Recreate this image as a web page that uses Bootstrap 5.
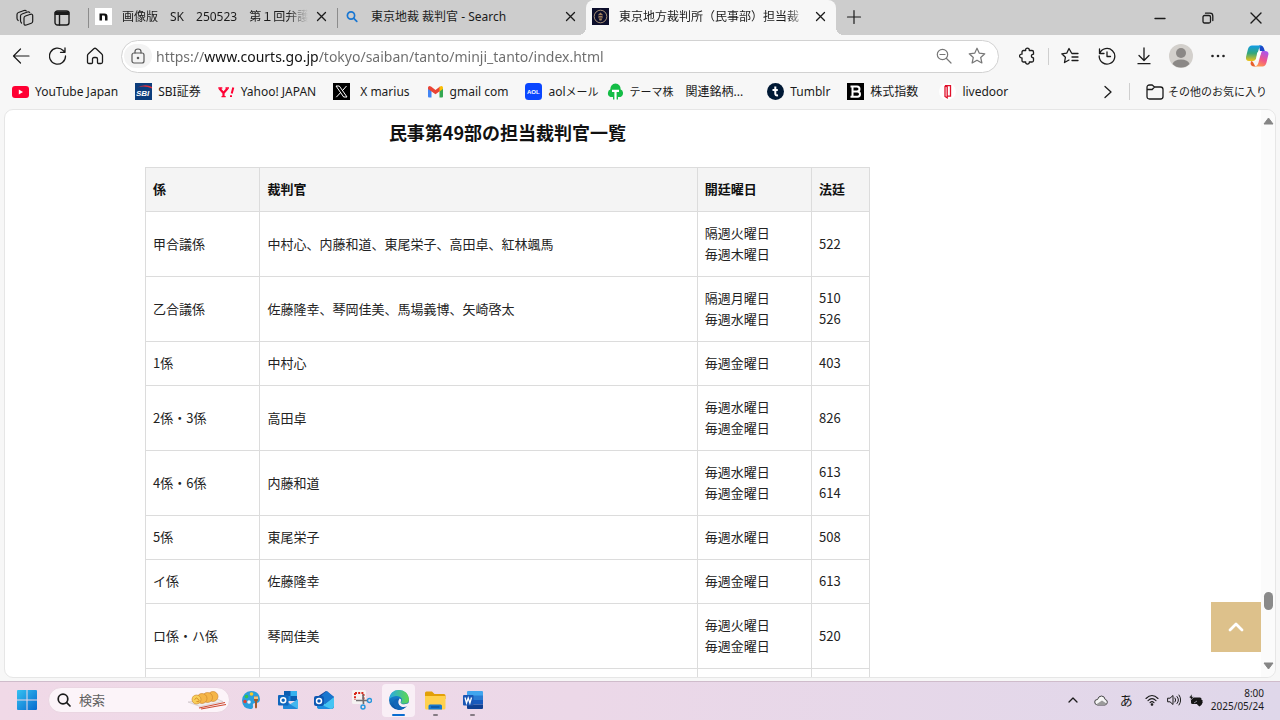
<!DOCTYPE html>
<html lang="ja">
<head>
<meta charset="utf-8">
<meta name="viewport" content="width=device-width, initial-scale=1">
<title>東京地方裁判所（民事部）担当裁判官一覧</title>
<link rel="stylesheet" href="https://cdn.jsdelivr.net/npm/bootstrap@5.3.0/dist/css/bootstrap.min.css">
<style>
  body { font-family: "Noto Sans", "Noto Sans CJK JP", sans-serif; font-size: 12px; line-height: 18px; color: #1b1b1b; background: #f7f7f7; }
  svg { display: block; flex: none; }
  .ln { fill: none; stroke: currentColor; stroke-linecap: round; stroke-linejoin: round; }
  .plain { border: 0; background: transparent; padding: 0; color: inherit; display: flex; align-items: center; justify-content: center; flex: none; }
  a { color: inherit; text-decoration: none; }

  .tabstrip { background: #cdcdcd; height: 35px; }
  .strip-lead { width: 88px; padding-left: 16px; gap: 20px; }
  .browser-tab { width: 249px; height: 35px; padding: 0 6px 2px 6px; border-left: 1px solid transparent; position: relative; min-width: 0; }
  .browser-tab::before { content: ""; position: absolute; left: -1px; top: 8px; height: 20px; border-left: 1px solid #8c8c8c; }
  .browser-tab.current { background: #f7f7f7; border-radius: 8px 8px 0 0; border: 0; width: 250px; }
  .browser-tab.current::before, .browser-tab.current::after { content: ""; position: absolute; bottom: 0; top: auto; width: 8px; height: 8px; border: 0; }
  .browser-tab.current::before { left: -8px; background: radial-gradient(circle at 0 0, transparent 8px, #f7f7f7 8px); }
  .browser-tab.current::after { right: -8px; background: radial-gradient(circle at 100% 0, transparent 8px, #f7f7f7 8px); }
  .tab-title { flex: 1 1 0; min-width: 0; overflow: hidden; white-space: nowrap; margin-left: 10px; }
  .fade-end { -webkit-mask-image: linear-gradient(90deg, #000 calc(100% - 20px), transparent); mask-image: linear-gradient(90deg, #000 calc(100% - 20px), transparent); }
  .win-btn { width: 48px; height: 35px; }

  .toolbar { height: 42px; padding: 0 3px 0 2px; }
  .tool { width: 37px; height: 34px; }
  .tool-wide { width: 41px; }
  .tool-sep { margin: 0 2px; }
  .address { height: 33px; border: 1px solid #d2d2d2; border-radius: 17px; background: #fff; padding: 0 8px 0 2px; margin: 0 10px 0 8px; }
  .lock-disc { width: 28px; height: 24px; border-radius: 14px; background: #f3f3f3; color: #5a5a5a; }
  .address-action { color: #777; }
  .url-box { border: 0; outline: 0; padding: 0; font-size: 14px; height: 24px; min-width: 0; color: #666;
    background: linear-gradient(90deg, #6b6b6b 48px, #111 48px, #111 163px, #6b6b6b 163px); -webkit-background-clip: text; background-clip: text; -webkit-text-fill-color: transparent; }
  .vline { width: 1px; height: 17px; background: #cfcfcf; flex: none; }

  .favbar { height: 32px; padding: 0 13px 3px 12px; white-space: nowrap; }
  .fav { gap: 6px; flex: none; margin-right: 17px; }
  .kana { font-size: 11px; }

  .viewport { background: #fff; border: 1px solid #e6e6e6; border-radius: 9px; margin: 0 4px 3px 4px; position: relative; min-height: 0; }
  .doc { padding-left: 140px; font-family: "Noto Sans CJK JP", sans-serif; }
  .doc-inner { max-width: 725px; }
  .doc h2 { font-size: 18px; line-height: 26px; font-weight: 700; color: #111; margin: 9px 0 22px; text-align: center; }
  .judges { font-size: 13px; line-height: 21px; table-layout: fixed; border-collapse: collapse; color: #222; }
  .judges th, .judges td { border: 1px solid #dcdcdc; padding: 10px 7px 12px; vertical-align: middle; text-align: left; }
  .judges th { background: #f4f4f4; color: #111; font-weight: 700; }
  .scroll-rail { width: 14px; background: #fbfbfb; border-radius: 0 9px 9px 0; padding: 7px 0; }
  .scroll-thumb { width: 9px; height: 18px; border-radius: 5px; background: #8a8a8a; }
  .to-top { position: absolute; right: 14px; bottom: 25px; width: 50px; height: 50px; background: #ddc18b; color: #fff; }

  .taskbar { height: 39px; background: linear-gradient(90deg, #f0d9e7, #ecd8e8 45%, #dfd7ea); border-top: 1px solid #cfbccb; padding: 0 16px 2px 17px; }
  .task-search { width: 182px; height: 26px; border-radius: 13px; background: #fcf4f9; border: 1px solid #ead6e2; margin: 0 2px 0 11px; padding: 0 2px 0 8px; gap: 8px; }
  .task-search input { border: 0; outline: 0; background: transparent; padding: 0; width: 60px; font-size: 13px; color: #555; flex: 1 1 0; }
  .task-search input::placeholder { color: #606060; opacity: 1; }
  .task-item { width: 37px; height: 33px; position: relative; border-radius: 4px; }
  .task-item.open::after { content: ""; position: absolute; bottom: 1px; width: 5px; height: 2px; border-radius: 1px; background: #857b84; }
  .task-item.front { background: #f9eff6; width: 33px; margin: 0 2px; }
  .task-item.front::after { width: 13px; background: #0a6cd0; }
  .ime { font-size: 13px; }
  .clock { font-size: 10px; line-height: 13px; text-align: right; }
</style>
</head>
<body class="vh-100 d-flex flex-column overflow-hidden">

<header class="flex-shrink-0">
  <div class="tabstrip d-flex align-items-center">
    <div class="strip-lead d-flex align-items-center flex-shrink-0">
      <button class="plain" aria-label="ワークスペース"><svg width="18" height="18" viewBox="0 0 18 18" class="ln" stroke-width="1.2"><path d="M9.500 7 14.500 5.300Q16.700 4.700 16.700 6.800v5.400Q16.700 13.700 15.300 14.200L10.300 16Q8 16.600 8 14.500V9Q8 7.500 9.500 7zM5.500 14Q4.500 13 4.500 11.500V7Q4.500 5.500 6 5L11.500 3Q13 2.500 13.700 3.500M2.200 11.500Q1 10.700 1 9.300V5.500Q1 4 2.500 3.500L8 1.500Q9.500 1 10.200 1.800"/></svg></button>
      <button class="plain" aria-label="タブ操作"><svg width="16" height="16" viewBox="0 0 16 16" class="ln" stroke-width="1.4"><rect x="1" y="1" width="14" height="14" rx="2.500"/><path d="M1.500 2.500h13M1.500 4h13" stroke-width="2"/><path d="M5.500 5v10"/></svg></button>
    </div>
    <a href="#" class="browser-tab d-flex align-items-center">
      <svg width="17" height="17" viewBox="0 0 17 17"><rect width="17" height="17" fill="#fff"/><path d="M4.500 12.500V5.500h5Q12.500 5.500 12.500 8.500v4H10V9Q10 7.600 8.900 7.600H7v4.900z" fill="#111"/></svg>
      <span class="tab-title fade-end">画像版　SK　250523　第１回弁護</span>
      <span class="ms-2 me-1"><svg width="11" height="11" viewBox="0 0 11 11" class="ln" stroke-width="1.300"><path d="M1.500 1.500l8 8M9.500 1.500l-8 8"/></svg></span>
    </a>
    <a href="#" class="browser-tab d-flex align-items-center">
      <svg width="17" height="17" viewBox="0 0 17 17" fill="none" stroke="#1876d2" stroke-width="1.700" stroke-linecap="round"><circle cx="7" cy="7.500" r="3.600"/><path d="M9.800 10.300l3 3"/></svg>
      <span class="tab-title">東京地裁 裁判官 - Search</span>
      <span class="ms-2 me-1"><svg width="11" height="11" viewBox="0 0 11 11" class="ln" stroke-width="1.300"><path d="M1.500 1.500l8 8M9.500 1.500l-8 8"/></svg></span>
    </a>
    <a href="#" class="browser-tab current d-flex align-items-center" aria-current="page">
      <svg width="17" height="17" viewBox="0 0 17 17"><rect width="17" height="17" fill="#0c0e2b"/><circle cx="8.500" cy="8.500" r="6.300" fill="none" stroke="#a58f75"/><path d="M8.500 4.500l2 2v3l-1 3h-2l-1-3v-3z" fill="#a07f5d"/><path d="M6.500 7.500h4M7 10h3" stroke="#0c0e2b" stroke-width=".8"/></svg>
      <span class="tab-title fade-end">東京地方裁判所（民事部）担当裁</span>
      <span class="ms-2 me-1"><svg width="11" height="11" viewBox="0 0 11 11" class="ln" stroke-width="1.300"><path d="M1.500 1.500l8 8M9.500 1.500l-8 8"/></svg></span>
    </a>
    <button class="plain ms-1 px-1" aria-label="新しいタブ"><svg width="20" height="20" viewBox="0 0 20 20" class="ln" stroke-width="1.200"><path d="M10 2.500v13M3.500 9h13"/></svg></button>
    <div class="d-flex ms-auto">
      <button class="plain win-btn" aria-label="最小化"><svg width="12" height="12" viewBox="0 0 12 12" class="ln" stroke-width="1.400"><path d="M1 6.500h10"/></svg></button>
      <button class="plain win-btn" aria-label="元に戻す"><svg width="12" height="12" viewBox="0 0 12 12" class="ln" stroke-width="1.300"><rect x="1" y="3.500" width="7.500" height="7.500" rx="1.500"/><path d="M3.500 1.200H8Q10.800 1.200 10.800 4v4.500"/></svg></button>
      <button class="plain win-btn" aria-label="閉じる"><svg width="12" height="12" viewBox="0 0 12 12" class="ln" stroke-width="1.400"><path d="M1 1l10 10M11 1l-10 10"/></svg></button>
    </div>
  </div>

  <div class="toolbar d-flex align-items-center">
    <button class="plain tool" aria-label="戻る"><svg width="18" height="18" viewBox="0 0 18 18" class="ln" stroke-width="1.200"><path d="M17 9H1.500M8.500 2 1.500 9l7 7"/></svg></button>
    <button class="plain tool" aria-label="更新"><svg width="18" height="18" viewBox="0 0 18 18" class="ln" stroke-width="1.300"><path d="M16.500 9a8 8 0 1 1-2.300-5.500L16 5.200M16 1v4.300h-4.500"/></svg></button>
    <button class="plain tool" aria-label="ホーム"><svg width="18" height="18" viewBox="0 0 18 18" class="ln" stroke-width="1.300"><path d="M1.500 8.500Q1.500 7.600 2.200 7L7.800 1.700Q9 .8 10.200 1.700L15.800 7Q16.500 7.600 16.500 8.500V15Q16.500 16.500 15 16.500H12.500Q11.500 16.500 11.500 15.500V12Q11.500 10.500 10 10.500H8Q6.500 10.500 6.500 12v3.500Q6.500 16.500 5.500 16.500H3Q1.500 16.500 1.500 15z"/></svg></button>
    <div class="address d-flex align-items-center flex-grow-1">
      <button class="plain lock-disc" aria-label="サイト情報"><svg width="14" height="16" viewBox="0 0 14 16" class="ln" stroke-width="1.200"><rect x="1" y="5" width="12" height="10" rx="2"/><path d="M4 5V3.500Q4 1 7 1t3 2.500V5"/><circle cx="7" cy="10" r=".7" fill="currentColor"/></svg></button>
      <input class="url-box flex-grow-1 ms-1" type="text" aria-label="アドレス" value="https://www.courts.go.jp/tokyo/saiban/tanto/minji_tanto/index.html">
      <button class="plain address-action me-3" aria-label="縮小"><svg width="16" height="16" viewBox="0 0 16 16" class="ln" stroke-width="1.200"><circle cx="6.500" cy="6.500" r="5.200"/><path d="M4 6.500h5M10.500 10.500l4.500 4.500"/></svg></button>
      <button class="plain address-action me-1" aria-label="お気に入りに追加"><svg width="18" height="18" viewBox="0 0 18 18" class="ln" stroke-width="1.200"><path d="M9 1.200l2.300 5 5.500.6-4.100 3.700 1.200 5.500L9 13.200 4.100 16l1.200-5.500L1.200 6.800l5.500-.6z"/></svg></button>
    </div>
    <button class="plain tool" aria-label="拡張機能"><svg width="17" height="18" viewBox="0 0 17 18" class="ln" stroke-width="1.300"><path d="M4.500 3.500h2.200C6 .3 10.800.3 10.300 3.500H13Q14.500 3.500 14.500 5v2.200Q12.300 7.500 12.300 9.100t2.200 1.900v2.500Q14.500 15 13 15h-2.700c.5 2.700-4.200 2.700-3.600 0H4.500Q3 15 3 13.500v-2.700C-.2 11.300-.2 6.700 3 7.200V5Q3 3.500 4.500 3.500z"/></svg></button>
    <span class="vline tool-sep"></span>
    <button class="plain tool" aria-label="お気に入り"><svg width="18" height="18" viewBox="0 0 18 18" class="ln" stroke-width="1.300"><path d="M10.500 6 8 1.500 5.700 6.200.8 6.800l3.600 3.500-.9 5.200L8 13M11 6.500h6M11 10h6M11 13.500h6"/></svg></button>
    <button class="plain tool" aria-label="履歴"><svg width="18" height="18" viewBox="0 0 18 18" class="ln" stroke-width="1.300"><path d="M1.700 6.500A7.800 7.800 0 1 1 1.200 9M1.500 2v4.500H6M9 5v4.500h3.500"/></svg></button>
    <button class="plain tool" aria-label="ダウンロード"><svg width="14" height="18" viewBox="0 0 14 18" class="ln" stroke-width="1.300"><path d="M7 1v12M2 8.500l5 5 5-5M1 16.700h12"/></svg></button>
    <button class="plain tool" aria-label="プロファイル"><svg width="24" height="24" viewBox="0 0 24 24"><circle cx="12" cy="12" r="12" fill="#d3d0cc"/><circle cx="12" cy="9" r="5" fill="#8b8886"/><path d="M3.500 20Q5 15.500 12 15.500T20.500 20Q17 23.500 12 23.500T3.500 20z" fill="#8b8886"/></svg></button>
    <button class="plain tool" aria-label="設定など"><svg width="16" height="4" viewBox="0 0 16 4" fill="#222"><circle cx="2.500" cy="2" r="1.300"/><circle cx="8" cy="2" r="1.300"/><circle cx="13.500" cy="2" r="1.300"/></svg></button>
    <button class="plain tool tool-wide" aria-label="Copilot"><svg width="24" height="24" viewBox="0 0 24 24">
      <defs>
        <linearGradient id="cpA" x1="0" y1="0" x2="0" y2="1"><stop offset="0" stop-color="#0f9be8"/><stop offset=".5" stop-color="#34a77a"/><stop offset="1" stop-color="#f0c419"/></linearGradient>
        <linearGradient id="cpB" x1=".7" y1="0" x2=".3" y2="1"><stop offset="0" stop-color="#a855f0"/><stop offset=".55" stop-color="#f0558a"/><stop offset="1" stop-color="#ff9a4a"/></linearGradient>
      </defs>
      <path d="M14 1.500h2q2 0 2.800 2.500l1 3H15z" fill="#1b49c9"/>
      <path d="M7 1.500h10Q14.500 2 13.500 6l-2.300 8.500Q10.500 17 8 17H4Q.5 17 1 13l2-8Q4 1.500 7 1.500z" fill="url(#cpA)"/>
      <path d="M6 17q2 0 3 3t3 2.500h-3Q6.500 22.500 5.500 20z" fill="#e8602c"/>
      <path d="M16 7h4q3.500 0 3.500 3l-2 8.500q-1 4-4 4H10q2.500-.5 3.500-4L16 9z" fill="url(#cpB)"/>
      <path d="M12 9.500Q12.500 7 15.500 7H17l-3.500 8Q12.500 17 9 17q2-.5 2.300-3z" fill="#fff"/>
    </svg></button>
  </div>

  <nav class="favbar d-flex align-items-center" aria-label="お気に入りバー">
    <a href="#" class="fav d-flex align-items-center"><svg width="17" height="17" viewBox="0 0 17 17"><rect y="3" width="17" height="12" rx="3" fill="#ff0033"/><path d="M6.800 6.500v5l4.200-2.500z" fill="#fff"/></svg>YouTube Japan</a>
    <a href="#" class="fav d-flex align-items-center"><svg width="17" height="17" viewBox="0 0 17 17"><rect width="17" height="17" fill="#0c3d7c"/><path d="M1 5Q10 0 17 4v1.500Q9 2 1 5z" fill="#e0303c"/><text x="1" y="13" font-family="Liberation Sans, sans-serif" font-size="8" font-weight="700" font-style="italic" fill="#fff">SBI</text></svg>SBI証券</a>
    <a href="#" class="fav d-flex align-items-center"><svg width="17" height="17" viewBox="0 0 17 17" fill="none" stroke="#ff0033" stroke-width="2"><path d="M1.500 5.500l4 4.500 4-4.500M5.500 10v3.500" stroke-width="2.200"/><path d="M.3 5h4M7.500 5h3.500M3.500 13.700h4.200" stroke-width="1.300"/><path d="M15.300 4.500l-1.600 6M13 12.300v1.600"/></svg>Yahoo! JAPAN</a>
    <a href="#" class="fav d-flex align-items-center"><svg width="17" height="17" viewBox="0 0 17 17"><rect width="17" height="17" fill="#000"/><path d="M3 3h3.300l7.700 11h-3.300zM13.500 3 9.300 7.800M7.500 9.700 3.300 14.200" fill="none" stroke="#fff"/></svg><span class="ps-1">X marius</span></a>
    <a href="#" class="fav d-flex align-items-center"><svg width="17" height="17" viewBox="0 0 17 17"><path d="M1 4.500 4.500 7v7.500H2q-1 0-1-1z" fill="#4285f4"/><path d="M16 4.500 12.500 7v7.500H15q1 0 1-1z" fill="#34a853"/><path d="M1 4.500Q1.500 2 4 3.500L8.500 7 13 3.500V8L8.500 11.300 1 6z" fill="#ea4335"/><path d="M12.500 4q2.500-2 3.500.5V6l-3.500 2.500z" fill="#fbbc04"/></svg>gmail com</a>
    <a href="#" class="fav d-flex align-items-center me-2"><svg width="17" height="17" viewBox="0 0 17 17"><rect width="17" height="17" rx="3.500" fill="#0a46ff"/><text x="2" y="11" font-family="Liberation Sans, sans-serif" font-size="6" font-weight="700" fill="#fff">AOL</text></svg><span>aol<span class="kana">メール</span></span></a>
    <a href="#" class="fav d-flex align-items-center me-4"><svg width="17" height="17" viewBox="0 0 17 17"><path d="M6 14H3.500Q.3 12.500 1 9.500 1.200 7.200 3.300 6.500 3.500 1 8.500.5q5 .5 5.200 6 2 .7 2.300 3 .3 3-2.500 4.500H11v2.500H6z" fill="#14bd46"/><path d="M5 7.800h7M8.500 7.800V17" stroke="#fff" stroke-width="2.200"/></svg><span><span class="kana">テーマ株</span>　関連銘柄...</span></a>
    <a href="#" class="fav d-flex align-items-center"><svg width="17" height="17" viewBox="0 0 17 17"><circle cx="8.500" cy="8.500" r="8.500" fill="#001935"/><path d="M8.300 3.500v7.300q0 2 2.700 1.500M5.500 7h5.300" fill="none" stroke="#fff" stroke-width="2"/></svg>Tumblr</a>
    <a href="#" class="fav d-flex align-items-center"><svg width="17" height="17" viewBox="0 0 17 17"><rect width="17" height="17" fill="#000"/><path d="M5.500 3v11M3.500 3.500H10q2.500.3 2.500 2.500T10 8.500H6h4.500q2.500.3 2.500 2.700t-2.500 2.500h-7" fill="none" stroke="#fff" stroke-width="2"/></svg>株式指数</a>
    <a href="#" class="fav d-flex align-items-center ms-1"><svg width="17" height="17" viewBox="0 0 17 17"><circle cx="8.500" cy="8.500" r="8.500" fill="#fff"/><path d="M6 3v10.500l2.200 1.300V3.800L6 2.700h5.500v10.500H8.500" fill="none" stroke="#e0102a" stroke-width="1.300"/></svg>livedoor</a>
    <button class="plain ms-auto" aria-label="他のお気に入り"><svg width="10" height="14" viewBox="0 0 10 14" class="ln" stroke-width="1.300"><path d="M2 1.500l6 5.500-6 5.500"/></svg></button>
    <span class="vline ms-3"></span>
    <a href="#" class="d-flex align-items-center kana gap-1 ps-3"><svg width="18" height="16" viewBox="0 0 18 16" class="ln" stroke-width="1.300"><path d="M1 3.500Q1 1 3.500 1h2.700L8.500 3H14.500Q17 3 17 5.500v7Q17 15 14.500 15h-11Q1 15 1 12.500zM1 5.500h5.200L8.500 3"/></svg>その他のお気に入り</a>
  </nav>
</header>

<main class="viewport d-flex flex-grow-1 overflow-hidden">
  <div class="doc flex-grow-1 overflow-hidden">
    <div class="doc-inner">
      <h2>民事第49部の担当裁判官一覧</h2>
      <table class="judges w-100">
        <colgroup><col style="width:15.8%"><col><col style="width:15.8%"><col style="width:8%"></colgroup>
        <thead><tr><th scope="col">係</th><th scope="col">裁判官</th><th scope="col">開廷曜日</th><th scope="col">法廷</th></tr></thead>
        <tbody>
          <tr><td>甲合議係</td><td>中村心、内藤和道、東尾栄子、高田卓、紅林颯馬</td><td>隔週火曜日<br>毎週木曜日</td><td>522</td></tr>
          <tr><td>乙合議係</td><td>佐藤隆幸、琴岡佳美、馬場義博、矢崎啓太</td><td>隔週月曜日<br>毎週水曜日</td><td>510<br>526</td></tr>
          <tr><td>1係</td><td>中村心</td><td>毎週金曜日</td><td>403</td></tr>
          <tr><td>2係・3係</td><td>高田卓</td><td>毎週水曜日<br>毎週金曜日</td><td>826</td></tr>
          <tr><td>4係・6係</td><td>内藤和道</td><td>毎週水曜日<br>毎週金曜日</td><td>613<br>614</td></tr>
          <tr><td>5係</td><td>東尾栄子</td><td>毎週水曜日</td><td>508</td></tr>
          <tr><td>イ係</td><td>佐藤隆幸</td><td>毎週金曜日</td><td>613</td></tr>
          <tr><td>ロ係・ハ係</td><td>琴岡佳美</td><td>毎週火曜日<br>毎週金曜日</td><td>520</td></tr>
          <tr><td></td><td></td><td></td><td></td></tr>
        </tbody>
      </table>
    </div>
  </div>
  <div class="scroll-rail d-flex flex-column align-items-center flex-shrink-0" aria-hidden="true">
    <svg width="11" height="8" viewBox="0 0 11 8"><path d="M5.500 1 10 7H1z" fill="#858585" stroke="#858585" stroke-linejoin="round"/></svg>
    <div class="flex-grow-1"></div>
    <div class="scroll-thumb"></div>
    <div class="mt-5 pt-1"></div>
    <svg width="11" height="8" viewBox="0 0 11 8"><path d="M5.500 7 1 1h9z" fill="#858585" stroke="#858585" stroke-linejoin="round"/></svg>
  </div>
  <button class="plain to-top" aria-label="ページの先頭へ"><svg width="16" height="10" viewBox="0 0 16 10" class="ln" stroke-width="2.800"><path d="M2 8l6-6 6 6"/></svg></button>
</main>

<footer class="taskbar d-flex align-items-center flex-shrink-0">
  <button class="plain" aria-label="スタート"><svg width="20" height="20" viewBox="0 0 20 20"><defs><linearGradient id="wn" x1="0" y1="0" x2="1" y2="1"><stop offset="0" stop-color="#35c1f1"/><stop offset="1" stop-color="#0669ce"/></linearGradient></defs><path d="M0 1q0-1 1-1h8.500v9.500H0zM10.500 0H19q1 0 1 1v8.500h-9.500zM0 10.500h9.500V20H1q-1 0-1-1zM10.500 10.500H20V19q0 1-1 1h-8.500z" fill="url(#wn)"/></svg></button>
  <label class="task-search d-flex align-items-center">
    <svg width="14" height="14" viewBox="0 0 14 14" class="ln" stroke-width="1.700"><circle cx="6" cy="6" r="4.800"/><path d="M9.700 9.700l3.300 3.300"/></svg>
    <input type="text" placeholder="検索" aria-label="検索">
    <svg width="40" height="20" viewBox="0 0 40 20"><path d="M1 12 30 9l6 2.500L13 16.500z" fill="#f1eeee" stroke="#c9bfc4" stroke-width=".6"/><g fill="#f5b548" stroke="#c9822c" stroke-width=".6"><ellipse cx="26" cy="6.500" rx="5" ry="5"/><ellipse cx="20.500" cy="7.500" rx="5" ry="5"/><ellipse cx="15" cy="8.500" rx="5" ry="5"/><ellipse cx="9.500" cy="9.500" rx="4.500" ry="4.500" fill="#f8cf5a"/></g><path d="M7.500 9.500q2-3 4 0t-2 2" fill="none" stroke="#d98a22"/><path d="M12 18 38 12.500M14 19l25-4.500" stroke="#cf4b32" stroke-width="1.100"/></svg>
  </label>
  <button class="plain task-item" aria-label="ペイント"><svg width="20" height="20" viewBox="0 0 20 20"><path d="M10 1q8 0 9 8 0 4-4 4-4-.5-3 3 .5 3-3 3Q1.500 18.500 1 10.500 2 1.500 10 1z" fill="#2a9edb"/><circle cx="5.500" cy="6.500" r="1.800" fill="#35c24a"/><circle cx="10.500" cy="4" r="1.800" fill="#f6c92b"/><circle cx="4" cy="11.500" r="1.700" fill="#e4412e"/><circle cx="8" cy="12" r="1.800" fill="#eef7fd"/><path d="M13 6.500h4v4l-1 1v6q-1 2-2 0v-6l-1-1z" fill="#a45b2c"/><path d="M13 6.500h4V9h-4z" fill="#f3c078"/></svg></button>
  <button class="plain task-item" aria-label="Outlook"><svg width="20" height="20" viewBox="0 0 20 20"><path d="M6 1h13v10H6z" fill="#0a5cb0"/><path d="M12.500 1H19v5h-6.500z" fill="#35b1ee"/><path d="M6 6h6.500v5H6z" fill="#1a86db"/><path d="M5 9l7.500 5L20 9v9q0 1-1 1H6q-1 0-1-1z" fill="#43b6ee"/><path d="M5 10l15 9H6q-1 0-1-1z" fill="#1f87d8"/><rect y="5" width="10.500" height="10.500" rx="1" fill="#1066bd"/><circle cx="5.200" cy="10.200" r="2.500" fill="none" stroke="#fff" stroke-width="1.500"/></svg></button>
  <button class="plain task-item" aria-label="Outlook (new)"><svg width="21" height="20" viewBox="0 0 21 20"><path d="M3 7 12 1l8 6v9q0 3-3 3H6q-3 0-3-3z" fill="#123f94"/><path d="M10 3l3-2 7 6-9 7-7-5z" fill="#1976cf"/><path d="M3 9l8 5 9-7v9q0 3-3 3H6q-3 0-3-3z" fill="#45c4f3"/><path d="M3 13l14 6H6q-3 0-3-3z" fill="#1d8de0"/><rect y="6" width="10" height="10" rx="2" fill="#0d58b3"/><circle cx="5" cy="11" r="2.500" fill="none" stroke="#fff" stroke-width="1.500"/></svg></button>
  <button class="plain task-item" aria-label="Snipping Tool"><svg width="20" height="20" viewBox="0 0 20 20"><rect width="14" height="14" rx="1.500" fill="#f5f2f2"/><path d="M3 3h8.500v8M3 3v7" fill="none" stroke="#d9291c" stroke-width="2" stroke-dasharray="2 1.200"/><path d="M11 4.500l.5 9.500M4 10.500h11" stroke="#716d70" stroke-width="1.700"/><circle cx="11" cy="17" r="2" fill="none" stroke="#2497dd" stroke-width="1.400"/><circle cx="17.500" cy="10.500" r="2" fill="none" stroke="#2497dd" stroke-width="1.400"/></svg></button>
  <button class="plain task-item front open" aria-label="Microsoft Edge"><svg width="22" height="22" viewBox="0 0 22 22">
    <defs><linearGradient id="eg1" x1="0" y1=".3" x2="1" y2=".3"><stop offset="0" stop-color="#27a9e6"/><stop offset="1" stop-color="#5fd84f"/></linearGradient><linearGradient id="eg2" x1="0" y1="0" x2="0" y2="1"><stop offset="0" stop-color="#1d97df"/><stop offset="1" stop-color="#0a4d9e"/></linearGradient></defs>
    <circle cx="11" cy="11" r="10" fill="url(#eg2)"/>
    <path d="M1 10.500Q2 1 11 1q9 .5 10 9 .2 4.700-5 4.700-3.500 0-3.200-1.500 1.700-1.500 1-3.500Q12 6.500 8 7q-5 .5-7 3.500z" fill="url(#eg1)"/>
    <path d="M5.500 14q0-4.500 6-4.500-4 4.500.8 8 3 1.500 6.200-.5-3 4-7.500 4-5-1.500-5.500-7z" fill="#1366b8"/>
    <path d="M11.500 9.500q2.500.5 1.300 3-.8 1.500.7 2.300 3.500 1.500 8.500-1.300l-1.500 3.300q-4.500 2-7.500.7-4.500-3-1.500-8z" fill="#f9eff6"/></svg></button>
  <button class="plain task-item open" aria-label="エクスプローラー"><svg width="21" height="19" viewBox="0 0 21 19"><path d="M0 2q0-1.500 1.500-1.500H7L9.500 3H19q1.500 0 1.500 1.500V8H0z" fill="#e2a008"/><path d="M0 5h20.500v12q0 1.500-1.500 1.500H1.500Q0 18.500 0 17z" fill="#ffd14d"/><path d="M3.500 18.500V15q0-1.500 1.500-1.500h10.500q1.500 0 1.500 1.500v3.500z" fill="#1478cf"/><path d="M6 16h8.500" stroke="#0a4f94" stroke-width="1.300"/></svg></button>
  <button class="plain task-item open" aria-label="Word"><svg width="20" height="20" viewBox="0 0 20 20"><path d="M5 1h14q1 0 1 1v4H4V2q0-1 1-1z" fill="#41a5ee"/><path d="M4 5.500h16V10H4z" fill="#2b7cd3"/><path d="M4 10h16v4.500H4z" fill="#185abd"/><path d="M4 14.500h16V18q0 1-1 1H5q-1 0-1-1z" fill="#103f91"/><rect y="5" width="10.500" height="10.500" rx="1" fill="#1b57b5"/><path d="M2 7.500l1.500 5.500L5.200 8l1.700 5 1.600-5.500" fill="none" stroke="#fff" stroke-width="1.300"/></svg></button>

  <div class="d-flex align-items-center ms-auto">
    <button class="plain me-3" aria-label="隠れているアイコン"><svg width="10" height="6" viewBox="0 0 10 6" class="ln" stroke-width="1.300"><path d="M1 5l4-4 4 4"/></svg></button>
    <button class="plain me-2" aria-label="OneDrive"><svg width="14" height="11" viewBox="0 0 14 11"><path d="M3.500 10Q.7 9.700.7 7T3.500 4.500Q4.500 1 7.500 1t3.700 3.500Q13.500 5 13.300 7.300T11 10z" fill="#f5f5f5" stroke="#444"/><path d="M2 9.500 8 5.500l4.500 3-1.500 1.500H3.500z" fill="#9b9b9b"/></svg></button>
    <button class="plain ime mx-1" aria-label="入力モード">あ</button>
    <button class="plain ms-2 me-2" aria-label="ネットワーク"><svg width="14" height="12" viewBox="0 0 14 12" class="ln" stroke-width="1.100"><path d="M1 4.500q6-6 12 0M3 6.700q4-4 8 0M5 8.700q2-2 4 0"/><circle cx="7" cy="10.500" r=".8" fill="currentColor"/></svg></button>
    <button class="plain me-2" aria-label="音量"><svg width="14" height="12" viewBox="0 0 14 12" class="ln" stroke-width="1"><path d="M1 4.200h2L6 1.500v9L3 7.800H1zM8 4q1.500 2 0 4M10 2.500q3 3.500 0 7M12 1q3.500 5 0 10"/></svg></button>
    <button class="plain" aria-label="バッテリー"><svg width="14" height="13" viewBox="0 0 14 13"><path d="M2 5q0-1.500 1.500-1.500h7.500q1.500 0 1.500 1.500v1h1v3h-1v1h-9Q2 10 2 8.500z" fill="#161616"/><path d="M0 3.500 3 0v2.700h2L1.500 6.500V4zM5 9l3-2" stroke="#ded6e8" stroke-width=".6" fill="#161616"/><path d="M10.500 8.500q2-1.500 3 .3-.3 2-3 3.700-2.700-1.700-3-3.700 1-1.800 3-.3z" fill="#161616"/></svg></button>
    <div class="clock ms-2">8:00<br>2025/05/24</div>
  </div>
</footer>

<script src="https://cdn.jsdelivr.net/npm/bootstrap@5.3.0/dist/js/bootstrap.bundle.min.js"></script>
</body>
</html>
